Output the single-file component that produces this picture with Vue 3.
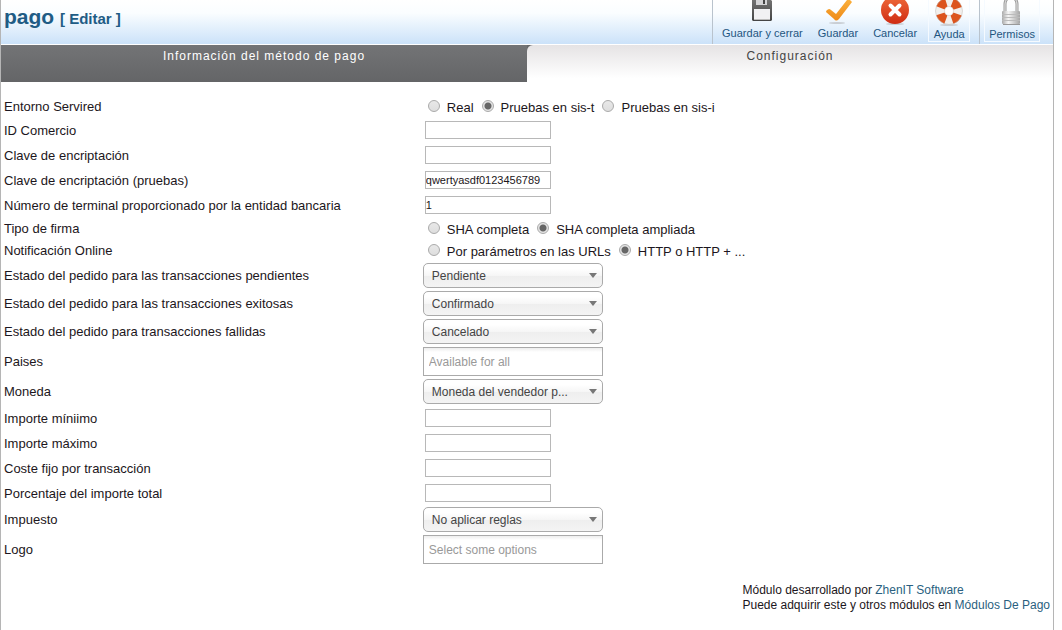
<script setup>
import { reactive } from 'vue'

const rows = reactive([
  { id: 'entorno', label: 'Entorno Servired', type: 'radio', value: 'Pruebas en sis-t', options: ['Real', 'Pruebas en sis-t', 'Pruebas en sis-i'] },
  { id: 'comercio', label: 'ID Comercio', type: 'text', value: '' },
  { id: 'clave', label: 'Clave de encriptación', type: 'text', value: '' },
  { id: 'clave-pruebas', label: 'Clave de encriptación (pruebas)', type: 'text', value: 'qwertyasdf0123456789' },
  { id: 'terminal', label: 'Número de terminal proporcionado por la entidad bancaria', type: 'text', value: '1' },
  { id: 'firma', label: 'Tipo de firma', type: 'radio', value: 'SHA completa ampliada', options: ['SHA completa', 'SHA completa ampliada'] },
  { id: 'notificacion', label: 'Notificación Online', type: 'radio', value: 'HTTP o HTTP + ...', options: ['Por parámetros en las URLs', 'HTTP o HTTP + ...'] },
  { id: 'pendientes', label: 'Estado del pedido para las transacciones pendientes', type: 'select', value: 'Pendiente' },
  { id: 'exitosas', label: 'Estado del pedido para las transacciones exitosas', type: 'select', value: 'Confirmado' },
  { id: 'fallidas', label: 'Estado del pedido para transacciones fallidas', type: 'select', value: 'Cancelado' },
  { id: 'paises', label: 'Paises', type: 'multi', value: '', placeholder: 'Available for all' },
  { id: 'moneda', label: 'Moneda', type: 'select', value: 'Moneda del vendedor p...' },
  { id: 'minimo', label: 'Importe míniimo', type: 'text', value: '' },
  { id: 'maximo', label: 'Importe máximo', type: 'text', value: '' },
  { id: 'coste', label: 'Coste fijo por transacción', type: 'text', value: '' },
  { id: 'porcentaje', label: 'Porcentaje del importe total', type: 'text', value: '' },
  { id: 'impuesto', label: 'Impuesto', type: 'select', value: 'No aplicar reglas' },
  { id: 'logo', label: 'Logo', type: 'multi', value: '', placeholder: 'Select some options' },
])
</script>

<template>
  <div class="page">
    <header class="header">
      <h1 class="title">pago <small>[ Editar ]</small></h1>
      <div class="toolbar">
        <button type="button" class="tool">
          <svg width="32" height="26" viewBox="0 0 32 26" aria-hidden="true">
            <defs>
              <linearGradient id="disk" x1="0" y1="0" x2="0" y2="1"><stop offset="0" stop-color="#777" /><stop offset="1" stop-color="#444" /></linearGradient>
            </defs>
            <path d="M6-2h17l3 3v19l-1 1H7l-1-1z" fill="url(#disk)" />
            <path d="M10-2h11v7H10z" fill="#d4d4d6" />
            <path d="M17-1h2v5h-2z" fill="#444" />
            <path d="M8 9h16v11H8z" fill="#f1f1f3" />
            <path d="M8 19h16v1H8z" fill="#bbb" />
          </svg>
          <span>Guardar y cerrar</span>
        </button>
        <button type="button" class="tool">
          <svg width="32" height="26" viewBox="0 0 32 26" aria-hidden="true">
            <defs>
              <linearGradient id="tick" x1="0" y1="0" x2="0" y2="1"><stop offset="0" stop-color="#fbb03c" /><stop offset="1" stop-color="#ee8a17" /></linearGradient>
            </defs>
            <ellipse cx="15" cy="23" rx="8" ry="1" fill="#c9ced4" />
            <path d="M4 12q0-1 1-2l2-1q1 0 2 1l5 4L25 0q1-1 3 0l2 2-13 17q-3 3-5 0z" fill="url(#tick)" />
          </svg>
          <span>Guardar</span>
        </button>
        <button type="button" class="tool">
          <svg width="32" height="26" viewBox="0 0 32 26" aria-hidden="true">
            <defs>
              <linearGradient id="stop" x1="0" y1="0" x2="0" y2="1"><stop offset="0" stop-color="#ef6a3a" /><stop offset="1" stop-color="#cf2c13" /></linearGradient>
            </defs>
            <ellipse cx="16" cy="24" rx="9" ry="1" fill="#c9ced4" />
            <circle cx="16" cy="10" r="14" fill="url(#stop)" />
            <path d="M11.500 5.500l9 9m0-9l-9 9" stroke="#fff" stroke-width="4" stroke-linecap="round" />
          </svg>
          <span>Cancelar</span>
        </button>
        <button type="button" class="tool boxed">
          <svg width="32" height="26" viewBox="0 0 32 26" aria-hidden="true">
            <ellipse cx="16" cy="25" rx="9" ry="1" fill="#c9ced4" />
            <circle cx="16" cy="11" r="9" fill="none" stroke="#f2efec" stroke-width="9" />
            <circle cx="16" cy="11" r="9" fill="none" stroke="#dc541d" stroke-width="9" stroke-dasharray="8 6.137" stroke-dashoffset="-3.070" />
            <circle cx="16" cy="11" r="13.500" fill="none" stroke="#bdb7b3" stroke-width=".5" />
            <circle cx="16" cy="11" r="4.500" fill="#fff" stroke="#d4c4bc" stroke-width=".6" />
          </svg>
          <span>Ayuda</span>
        </button>
        <span class="separator"></span>
        <button type="button" class="tool boxed">
          <svg width="32" height="26" viewBox="0 0 32 26" aria-hidden="true">
            <defs>
              <linearGradient id="lock"><stop offset="0" stop-color="#aaa" /><stop offset=".35" stop-color="#f5f5f5" /><stop offset="1" stop-color="#a5a5a5" /></linearGradient>
            </defs>
            <path d="M9 13V4a6 7 0 0 1 12 0v9" fill="none" stroke="#999" stroke-width="3" />
            <path d="M9 13V4a6 7 0 0 1 12 0v9" fill="none" stroke="#e8e8e8" stroke-width="1" />
            <rect x="6" y="11" width="18" height="13" rx="1" fill="url(#lock)" />
            <path d="M6 14.500h18M6 17.500h18M6 20.500h18" stroke="#bbb" stroke-width="1" />
            <path d="M7 24.500h17" stroke="#999" />
          </svg>
          <span>Permisos</span>
        </button>
      </div>
    </header>

    <nav class="tabs">
      <button type="button" class="tab">Información del método de pago</button>
      <button type="button" class="tab active">Configuración</button>
    </nav>

    <form class="form" @submit.prevent>
      <div v-for="row in rows" :key="row.id" class="row" :class="row.type">
        <span v-if="row.type === 'radio'" :id="row.id">{{ row.label }}</span>
        <label v-else :for="row.id">{{ row.label }}</label>

        <div v-if="row.type === 'radio'" class="choices" role="radiogroup" :aria-labelledby="row.id">
          <label v-for="option in row.options" :key="option" class="choice">
            <input v-model="row.value" type="radio" :name="row.id" :value="option" />
            <span>{{ option }}</span>
          </label>
        </div>
        <div v-else-if="row.type === 'select'" class="picker">
          <select :id="row.id" v-model="row.value">
            <option>{{ row.value }}</option>
          </select>
        </div>
        <input v-else :id="row.id" v-model="row.value" type="text" :placeholder="row.placeholder" />
      </div>
    </form>

    <footer class="footer">
      <p>
        Módulo desarrollado por <a href="#">ZhenIT Software</a><br />
        Puede adquirir este y otros módulos en <a href="#">Módulos De Pago</a>
      </p>
    </footer>
  </div>
</template>

<style>
body {
  background: #fff;
}
</style>

<style scoped>
.page {
  box-sizing: border-box;
  min-height: 100vh;
  margin-right: 8px;
  border: solid #b5b5b5;
  border-width: 0 1px;
  color: #1c1620;
  font: 13px/16px "Liberation Sans", Arial, sans-serif;
}

.page * {
  box-sizing: border-box;
}

button,
input,
select {
  margin: 0;
  font-family: inherit;
  color: inherit;
}

.header {
  display: flex;
  justify-content: space-between;
  height: 45px;
  border-bottom: 1px solid #fff;
  background: linear-gradient(#fff 0, #fafdff 30%, #cbe2f9 100%);
}

.title {
  margin: 0;
  padding: 4px 3px;
  color: #1f5c85;
  font-size: 21px;
  line-height: 26px;
}

.title small {
  font-size: 15px;
}

.toolbar {
  display: flex;
  gap: 1px;
  padding: 0 13px 0 2px;
  border-left: 1px solid #b9c3cd;
}

.tool {
  display: flex;
  flex-direction: column;
  align-items: center;
  height: 42px;
  padding: 0 6px;
  border: 1px solid transparent;
  border-top: 0;
  background: none;
  color: #1f5580;
  font-size: 11px;
  line-height: 14px;
}

.tool svg {
  flex: none;
}

.boxed {
  margin-left: 3px;
  padding: 0 4px;
  border-color: #f5faff;
}

.boxed span {
  padding-top: 1px;
}

.separator {
  width: 1px;
  margin-left: 8px;
  background: #b9c3cd;
}

.tabs {
  display: grid;
  grid-template-columns: 1fr 1fr;
  background: #68696b;
}

.tab {
  height: 37px;
  padding: 3px 0 18px;
  border: 0;
  background: linear-gradient(#737476, #646567);
  color: #fff;
  font-size: 12px;
  line-height: 16px;
  letter-spacing: 1px;
}

.tab.active {
  border-top-left-radius: 6px;
  background: linear-gradient(#e5e3e4, #fff 90%);
  color: #444;
}

.form {
  padding: 14px 2px 0 3px;
}

.row {
  display: grid;
  grid-template-columns: 40% 1fr;
  align-items: center;
}

.row.radio {
  height: 22px;
}

.row.text {
  height: 25px;
}

.row.select {
  height: 28px;
}

.row.multi {
  height: 32px;
}

.choices {
  display: flex;
  gap: 8px;
  padding-left: 5px;
}

.choice {
  display: flex;
  gap: 7px;
}

.choice span {
  padding-top: 2px;
}

.choice input {
  appearance: none;
  width: 12px;
  height: 12px;
  margin-top: 2px;
  border: 1px solid #aaa;
  border-radius: 50%;
  background: linear-gradient(#e8e8e8, #dedede);
}

.choice input:checked {
  background: radial-gradient(circle, #666 0 3px, #e4e4e4 4px);
}

.row.text > input {
  width: 126px;
  height: 18px;
  margin: 0 0 1px 2px;
  padding: 0;
  border: 1px solid #b8b8b8;
  background: #fff;
  font-size: 11px;
}

.picker {
  position: relative;
  width: 180px;
  margin-bottom: 1px;
}

.picker::after {
  content: "";
  position: absolute;
  top: 10px;
  right: 6px;
  border: solid transparent;
  border-width: 5px 4px 0;
  border-top-color: #777;
  pointer-events: none;
}

.picker select {
  display: block;
  appearance: none;
  width: 100%;
  height: 25px;
  padding: 0 24px 0 8px;
  border: 1px solid #aaa;
  border-radius: 5px;
  background: linear-gradient(#fff 20%, #f6f6f6 50%, #eee 52%, #f4f4f4 100%);
  color: #444;
  font-size: 12px;
}

.row.multi > input {
  width: 180px;
  height: 29px;
  margin-bottom: 1px;
  padding: 0 5px;
  border: 1px solid #aaa;
  background: linear-gradient(#eee 1%, #fff 15%);
  font-size: 12px;
}

.row.multi > input::placeholder {
  color: #999;
}

.footer {
  display: flex;
  justify-content: flex-end;
  padding: 17px 3px 0;
  font-size: 12px;
  line-height: 15px;
}

.footer p {
  margin: 0;
}

.footer a {
  color: #2a5f80;
  text-decoration: none;
}
</style>
